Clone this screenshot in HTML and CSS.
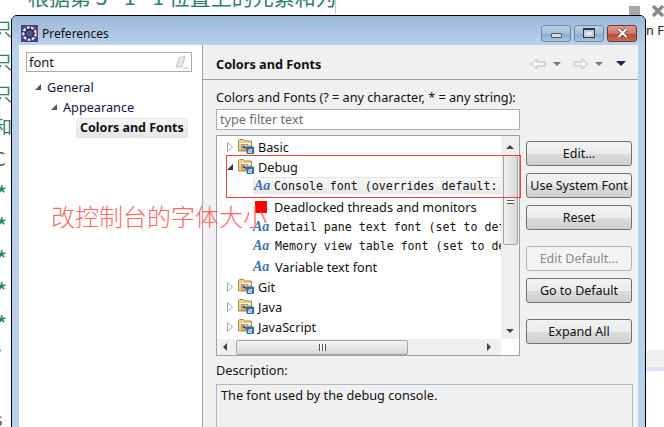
FILE: index.html
```html
<!DOCTYPE html>
<html lang="en">
  <head>
    <meta charset="UTF-8" />
    <title>Preferences</title>
    <link rel="stylesheet" href="styles.css">
  </head>
  <body>
    <svg width="0" height="0" class="defs">
      <symbol id="folder" viewBox="0 0 16 16">
        <path d="M.5 2.500l1-1h4l1.500 1.500h6.500v10h-13z" fill="#efcd85" stroke="#a98a52"/>
        <path d="M1.500 5h11.500v1.500h-11.500z" fill="#fdf3d4"/>
        <rect x="3.500" y="6.500" width="6" height="6" fill="#f4e6bf" stroke="#8a7650" stroke-width=".6"/>
        <rect x="4.500" y="7.500" width="2.500" height="2.500" fill="#2f5fa8"/>
        <rect x="7" y="8.500" width="2" height="3" fill="#c9402e"/>
        <rect x="4.500" y="10" width="2.500" height="2" fill="#e0a030"/>
        <rect x="8.500" y="8.500" width="7.500" height="7.500" rx="1" fill="#2d6da8"/>
        <text x="10" y="14.500" class="badgeText">a</text>
      </symbol>
      <symbol id="twisty" viewBox="0 0 6 10">
        <path d="M.5 .5l5 4.500-5 4.500z" fill="#fff" stroke="#a8a8a8"/>
      </symbol>
    </svg>

    <div class="desktop">
      <div class="behindTop">根据第 3 - 1 - 1 位置上的元素和为</div>
      <div class="behindLeft">
        <span class="g">只</span>
        <span class="g">只</span>
        <span class="g">只</span>
        <span class="g">和</span>
        <span class="b pushDown">C</span>
        <span class="g star">*</span>
        <span class="g star">*</span>
        <span class="g star">*</span>
        <span class="g star">*</span>
        <span class="g star">*</span>
        <span class="g">/</span>
        <span class="b pullUp">-</span>
        <span class="b">s</span>
      </div>
      <div class="behindIcons">
        <span class="miniSquare"></span>
        <svg width="14" height="14" viewBox="0 0 14 14"><path d="M2 2l10 10M12 2l-10 10" stroke="#8a8a8a" stroke-width="3.500"/></svg>
      </div>
      <div class="behindRight">n Fi</div>
      <div class="behindBar"></div>

      <div class="window">
        <div class="titlebar">
          <svg class="appIcon" width="17" height="17" viewBox="0 0 18 18">
            <rect width="18" height="18" fill="#4b3f86"/>
            <circle cx="9" cy="9" r="6.500" fill="#2c2a4a" stroke="#e8e8e8" stroke-width="2.500" stroke-dasharray="3 1.500"/>
            <circle cx="9" cy="9" r="3.500" fill="#57548a"/>
          </svg>
          <span class="title">Preferences</span>
          <div class="winBtns">
            <div class="winBtn"><span class="minGlyph"></span></div>
            <div class="winBtn"><span class="maxGlyph"></span></div>
            <div class="winBtn close">
              <svg width="13" height="10" viewBox="0 0 13 10"><path d="M2.500 1l8 8M10.500 1l-8 8" stroke="#5a2a24" stroke-width="3.500"/><path d="M2.500 1l8 8M10.500 1l-8 8" stroke="#fff" stroke-width="2.200"/></svg>
            </div>
          </div>
        </div>

        <div class="body">
          <div class="side">
            <div class="searchBox">
              <span>font</span>
              <svg width="14" height="14" viewBox="0 0 14 14"><path d="M1 12l3-9 6-2-3 11z" fill="#e6e6e6" stroke="#c4c4c4"/><path d="M8 13h5" stroke="#c4c4c4"/></svg>
            </div>
            <ul class="navTree">
              <li class="lvl1"><span class="open"></span>General</li>
              <li class="lvl2"><span class="open"></span>Appearance</li>
              <li class="lvl3"><b>Colors and Fonts</b></li>
            </ul>
          </div>

          <div class="main">
            <div class="mainHead">
              <h1>Colors and Fonts</h1>
              <div class="navArrows">
                <svg width="17" height="12" viewBox="0 0 17 12"><path d="M1 6l6-5v3h8v4h-8v3z" fill="#f4f4f4" stroke="#bdbdbd"/></svg>
                <span class="drop"></span>
                <svg width="17" height="12" viewBox="0 0 17 12"><path d="M16 6l-6-5v3h-8v4h8v3z" fill="#f4f4f4" stroke="#bdbdbd"/></svg>
                <span class="drop"></span>
                <span class="drop dark"></span>
              </div>
            </div>

            <div class="mainBody">
              <div class="hint">Colors and Fonts (? = any character, * = any string):</div>
              <div class="filter">type filter text</div>

              <div class="split">
                <div class="listBox">
                  <div class="listTop">
                    <ul class="tree">
                      <li class="row h20"><svg class="twisty"><use href="#twisty"/></svg><svg class="fold"><use href="#folder"/></svg>Basic</li>
                      <li class="row h20"><span class="open dark"></span><svg class="fold"><use href="#folder"/></svg>Debug</li>
                      <li class="row font sel h17"><i>Aa</i><span class="mono">Console font (overrides default:</span></li>
                      <li class="row font plain h22"><span class="noIcon"></span>Deadlocked threads and monitors</li>
                      <li class="row font h17"><i>Aa</i><span class="mono">Detail pane text font (set to def</span></li>
                      <li class="row font h21"><i>Aa</i><span class="mono">Memory view table font (set to de</span></li>
                      <li class="row font h21"><i>Aa</i>Variable text font</li>
                      <li class="row h20"><svg class="twisty"><use href="#twisty"/></svg><svg class="fold"><use href="#folder"/></svg>Git</li>
                      <li class="row h20"><svg class="twisty"><use href="#twisty"/></svg><svg class="fold"><use href="#folder"/></svg>Java</li>
                      <li class="row h20"><svg class="twisty"><use href="#twisty"/></svg><svg class="fold"><use href="#folder"/></svg>JavaScript</li>
                    </ul>
                    <div class="vScroll">
                      <span class="arrowUp"></span>
                      <div class="vThumb"><span class="grip"></span></div>
                      <span class="arrowDown"></span>
                    </div>
                  </div>
                  <div class="hScroll">
                    <span class="arrowLeft"></span>
                    <div class="hThumb"><span class="gripV"></span></div>
                    <span class="arrowRight"></span>
                  </div>
                </div>

                <div class="btnCol">
                  <button>Edit...</button>
                  <button>Use System Font</button>
                  <button>Reset</button>
                  <button class="gapTop" disabled>Edit Default...</button>
                  <button>Go to Default</button>
                  <button class="gapTop">Expand All</button>
                </div>
              </div>

              <div class="descLabel">Description:</div>
              <div class="descBox">The font used by the debug console.</div>
            </div>
          </div>
        </div>
      </div>

      <div class="noteRect"></div>
      <div class="noteSquare"></div>
      <div class="noteText">改控制台的字体大小</div>
    </div>
  </body>
</html>
```

FILE: styles.css
```css
* {
  box-sizing: border-box;
}

body {
  margin: 0;
  background: #fff;
  font-family: "Noto Sans", "Noto Sans CJK SC", sans-serif;
  font-size: 12.7px;
  color: #111;
}

.defs {
  position: absolute;
}

.badgeText {
  font-family: "Liberation Serif", serif;
  font-style: italic;
  font-weight: bold;
  font-size: 8px;
  fill: #fff;
}

.desktop {
  position: relative;
  width: 664px;
  height: 427px;
  overflow: hidden;
  background: #fff;
}

/* stuff behind the dialog */
.behindTop {
  position: absolute;
  left: 0;
  top: -19px;
  width: 336px;
  height: 33px;
  padding-left: 28px;
  white-space: nowrap;
  overflow: hidden;
  font-family: "Noto Sans CJK SC", sans-serif;
  font-size: 21px;
  color: #2e7d6b;
  border-right: 1px solid #ccc;
}

.behindLeft {
  position: absolute;
  left: -6px;
  top: 12px;
  width: 17px;
  display: flex;
  flex-direction: column;
  font-family: "Noto Sans CJK SC", sans-serif;
  font-size: 18px;
  line-height: 32.5px;
  overflow: hidden;
}

.behindLeft span {
  display: block;
}

.behindLeft .g {
  color: #2e7d6b;
}

.behindLeft .b {
  color: #7a4a30;
}

.behindLeft .star {
  padding-left: 2px;
  font-size: 24px;
}

.behindLeft .pushDown {
  margin-bottom: 3px;
}

.behindLeft .pullUp {
  margin-bottom: -3px;
}

.behindIcons {
  position: absolute;
  left: 629px;
  top: 4px;
  display: flex;
  gap: 11px;
  align-items: center;
}

.miniSquare {
  width: 11px;
  height: 11px;
  background: #a8a8a8;
}

.behindRight {
  position: absolute;
  left: 646px;
  top: 21px;
  width: 18px;
  white-space: nowrap;
  overflow: hidden;
  color: #222;
}

.behindBar {
  position: absolute;
  left: 646px;
  top: 350px;
  width: 18px;
  height: 21px;
  background: #f0f0f0;
  border-bottom: 4px solid #dfe3f5;
}

/* dialog */
.window {
  position: absolute;
  left: 11px;
  top: 15px;
  width: 635px;
  height: 430px;
  border: 1px solid #000;
  border-radius: 6px 6px 0 0;
  background: #b9d1ea;
  padding: 0 7px;
  display: flex;
  flex-direction: column;
}

.titlebar {
  height: 29px;
  margin: 0 -7px;
  padding: 5px 8px 0 9px;
  display: flex;
  align-items: center;
  gap: 4px;
  border-radius: 5px 5px 0 0;
  background: linear-gradient(#9cb9d9, #b9d1ea);
}

.title {
  font-size: 12px;
  color: #111;
}

.winBtns {
  margin-left: auto;
  display: flex;
  gap: 3px;
}

.winBtn {
  width: 30px;
  height: 17px;
  border: 1px solid #6f8aa6;
  border-radius: 3px;
  background: linear-gradient(#b8cfe6 0, #a4bfdc 50%, #88a9cc 51%, #a8c4e0 100%);
  display: flex;
  align-items: center;
  justify-content: center;
}

.winBtn.close {
  width: 30px;
  border-color: #6e3a34;
  background: linear-gradient(#dc9a8c 0, #cf7767 50%, #b84a38 51%, #c96a58 100%);
}

.minGlyph {
  width: 11px;
  height: 5px;
  margin-top: 4px;
  border: 1px solid #555;
  border-radius: 1px;
  background: #d6dce2;
}

.maxGlyph {
  width: 12px;
  height: 10px;
  border: 1px solid #333;
  border-top-width: 2px;
  background: #dfe8f2;
  box-shadow: inset 0 0 0 2px #b8cfe6;
}

.body {
  flex: 1;
  display: flex;
  min-height: 0;
}

.side {
  width: 184px;
  background: #fff;
  border-right: 1px solid #a0a0a0;
  padding: 7px 7px 0 7px;
}

.searchBox {
  width: 166px;
  height: 20px;
  border: 1px solid #ababab;
  padding: 0 2px;
  display: flex;
  align-items: center;
  justify-content: space-between;
  font-size: 13px;
}

.navTree {
  list-style: none;
  margin: 5px 0 0;
  padding: 0;
  color: #12123a;
}

.navTree li {
  height: 20px;
  line-height: 20px;
  display: flex;
  align-items: center;
}

.lvl1 {
  padding-left: 9px;
}

.lvl2 {
  padding-left: 25px;
}

.navTree .lvl3 {
  margin-top: 1px;
  padding-left: 50px;
}

.lvl3 b {
  padding: 0 3px;
  height: 20px;
  line-height: 18px;
  border: 1px solid #e4e4e4;
  border-radius: 3px;
  background: linear-gradient(#f6f6f6, #e6e6e6);
  color: #111;
  font-size: 12.5px;
  white-space: nowrap;
}

.open {
  width: 0;
  height: 0;
  margin-right: 6px;
  border-style: solid;
  border-width: 0 0 6px 6px;
  border-color: transparent transparent #555 transparent;
}

.open.dark {
  margin-right: 5px;
  border-bottom-color: #333;
}

.twisty {
  width: 6px;
  height: 10px;
  margin-right: 5px;
  flex: none;
}

.main {
  flex: 1;
  min-width: 0;
  background: #f0f0f0;
  display: flex;
  flex-direction: column;
}

.mainHead {
  height: 36px;
  border-bottom: 1px solid #a0a0a0;
  padding: 3px 13px 0;
  display: flex;
  align-items: center;
  justify-content: space-between;
}

.mainHead h1 {
  margin: 0;
  font-size: 12.7px;
  font-weight: bold;
}

.navArrows {
  display: flex;
  align-items: center;
  gap: 6px;
  margin-right: -1px;
}

.drop {
  width: 0;
  height: 0;
  margin-right: 5px;
  border-style: solid;
  border-width: 4px 4px 0 4px;
  border-color: #777 transparent transparent transparent;
}

.drop.dark {
  margin: 0 0 0 2px;
  border-width: 5px 5px 0 5px;
  border-top-color: #2c2250;
}

.mainBody {
  padding: 7px 6px 0 13px;
}

.hint {
  height: 20px;
  line-height: 20px;
}

.filter {
  width: 304px;
  height: 21px;
  margin-top: 2px;
  padding-left: 3px;
  line-height: 19px;
  border: 1px solid #abadb3;
  background: #fff;
  color: #6d6d6d;
}

.split {
  display: flex;
  margin-top: 5px;
}

.listBox {
  width: 304px;
  height: 221px;
  border: 1px solid #a0a0a0;
  background: #fff;
  display: flex;
  flex-direction: column;
}

.listTop {
  flex: 1;
  min-height: 0;
  display: flex;
}

.tree {
  flex: 1;
  min-width: 0;
  list-style: none;
  margin: 0;
  padding: 1px 0 0 10px;
  overflow: hidden;
}

.row {
  display: flex;
  align-items: center;
  white-space: nowrap;
}

.h17 { height: 17px; }
.h20 { height: 20px; }
.h21 { height: 21px; }
.h22 { height: 22px; }

.fold {
  width: 16px;
  height: 16px;
  margin-right: 4px;
  margin-top: -2px;
  flex: none;
}

.font {
  margin-left: 26px;
}

.font.plain {
  margin-top: 2px;
}

.font i {
  width: 22px;
  flex: none;
  font-family: "Liberation Serif", serif;
  font-weight: bold;
  font-size: 14px;
  color: #3a74b4;
}

.noIcon {
  width: 21px;
  flex: none;
}

.mono {
  font-family: "DejaVu Sans Mono", monospace;
  font-size: 11.6px;
}

.sel {
  width: 249px;
  overflow: hidden;
  border: 1px solid #e4e4e4;
  border-radius: 2px;
  background: linear-gradient(#f8f8f8, #e9e9e9);
}

.font.sel i {
  width: 20px;
}

.vScroll {
  width: 18px;
  flex: none;
  background: #efefef;
  display: flex;
  flex-direction: column;
  align-items: center;
}

.arrowUp, .arrowDown {
  width: 0;
  height: 0;
  border-style: solid;
  border-color: transparent;
}

.arrowUp {
  margin-top: 9px;
  border-width: 0 4px 4px 4px;
  border-bottom-color: #444;
}

.arrowDown {
  margin-top: 84px;
  border-width: 4px 4px 0 4px;
  border-top-color: #444;
}

.vThumb {
  width: 15px;
  height: 90px;
  margin-top: 6px;
  border: 1px solid #a6a6a6;
  border-radius: 2px;
  background: linear-gradient(90deg, #f0f0f0, #d8d8d8);
  display: flex;
  align-items: center;
  justify-content: center;
}

.grip {
  width: 7px;
  height: 7px;
  border-top: 1px solid #555;
  border-bottom: 1px solid #555;
  background: linear-gradient(#fff 0 2px, #555 2px 3px, #fff 3px);
}

.hScroll {
  height: 16px;
  flex: none;
  background: #efefef;
  display: flex;
  align-items: center;
  padding-left: 6px;
  margin-right: 18px;
}

.arrowLeft, .arrowRight {
  width: 0;
  height: 0;
  border-style: solid;
  border-color: transparent;
}

.arrowLeft {
  border-width: 4px 4px 4px 0;
  border-right-color: #444;
}

.arrowRight {
  margin-left: 79px;
  border-width: 4px 0 4px 4px;
  border-left-color: #444;
}

.hThumb {
  width: 172px;
  height: 15px;
  margin-left: 9px;
  border: 1px solid #a6a6a6;
  border-radius: 2px;
  background: linear-gradient(#f4f4f4, #d8d8d8);
  display: flex;
  align-items: center;
  justify-content: center;
}

.gripV {
  width: 7px;
  height: 7px;
  border-left: 1px solid #555;
  border-right: 1px solid #555;
  background: linear-gradient(90deg, #f4f4f4 0 2px, #555 2px 3px, #f4f4f4 3px);
}

.btnCol {
  width: 106px;
  margin-left: 6px;
  padding-top: 6px;
  display: flex;
  flex-direction: column;
  gap: 7px;
}

.btnCol button {
  height: 25px;
  padding: 0;
  border: 1px solid #707070;
  border-radius: 3px;
  background: linear-gradient(#f2f2f2 0, #ebebeb 50%, #dcdcdc 51%, #cfcfcf 100%);
  font-family: "Noto Sans", sans-serif;
  font-size: 12.5px;
  color: #111;
}

.btnCol button:disabled {
  border-color: #adb2b5;
  background: #f4f4f4;
  color: #8a8a8a;
}

.btnCol .gapTop {
  margin-top: 9px;
}

.descLabel {
  height: 20px;
  line-height: 20px;
  margin-top: 4px;
}

.descBox {
  width: 417px;
  height: 60px;
  margin-top: 4px;
  padding: 1px 4px;
  border: 1px solid #abb8c6;
  background: #f0f0f0;
}

/* red marks drawn on the screenshot */
.noteRect {
  position: absolute;
  left: 226px;
  top: 155px;
  width: 295px;
  height: 43px;
  border: 1px solid #f04040;
}

.noteSquare {
  position: absolute;
  left: 255px;
  top: 201px;
  width: 12px;
  height: 12px;
  background: #f00;
}

.noteText {
  position: absolute;
  left: 51px;
  top: 199px;
  font-family: "Noto Sans CJK SC", sans-serif;
  font-weight: 300;
  font-size: 24px;
  line-height: 34px;
  white-space: nowrap;
  color: #f66;
}
```
